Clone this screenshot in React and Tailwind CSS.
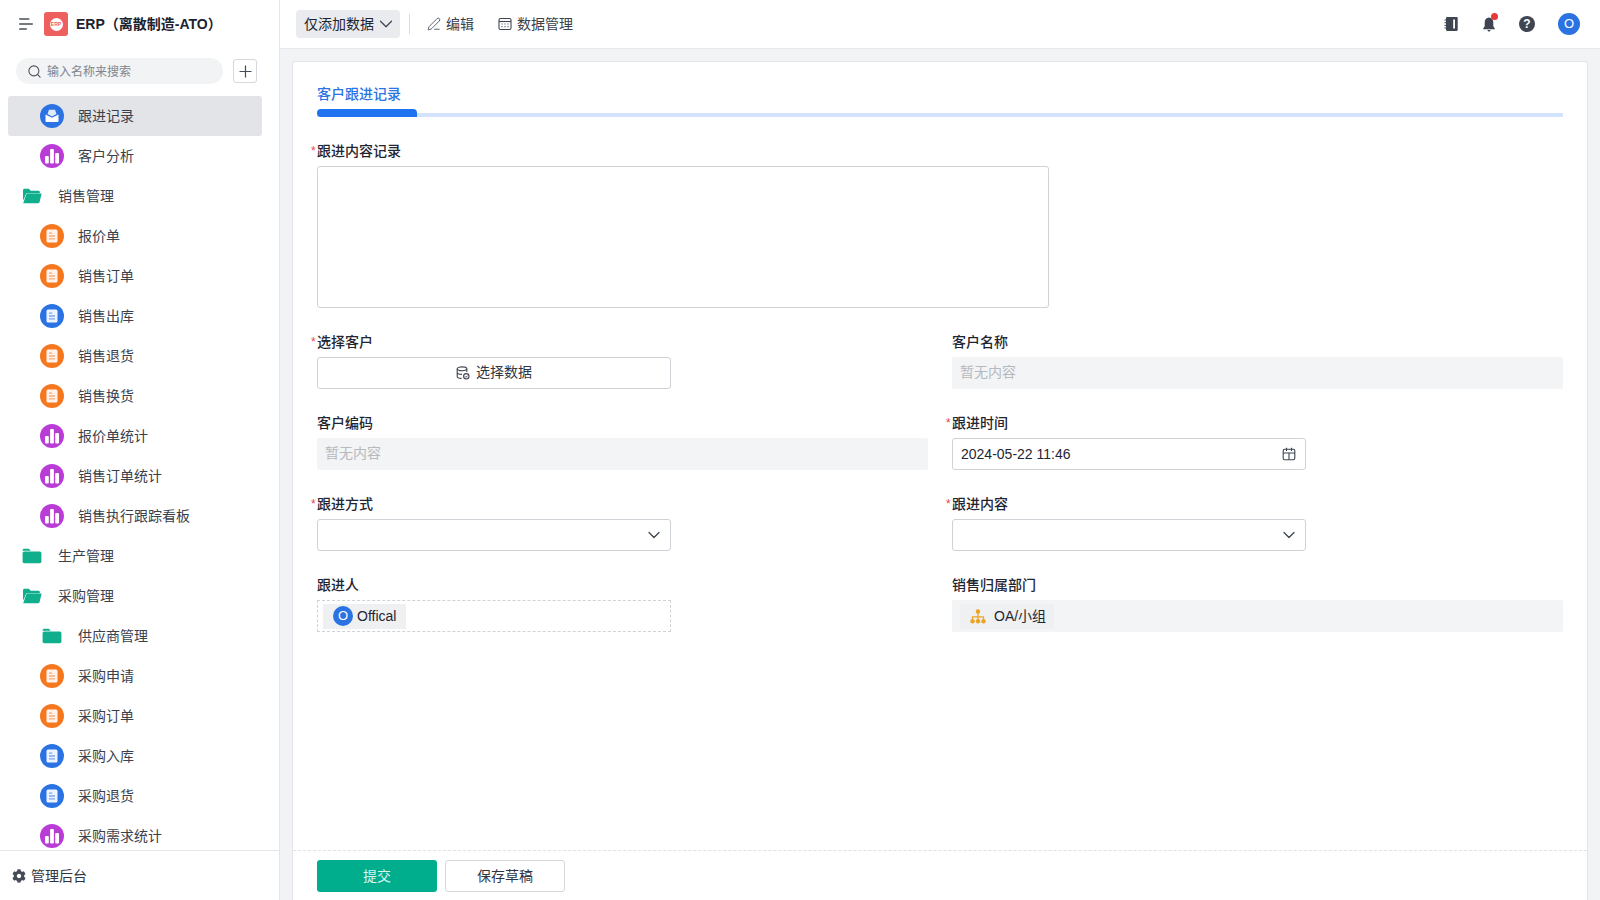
import React from 'react';
import { Search, Plus, ChevronDown, PenLine } from 'lucide-react';
import { FaCog } from 'react-icons/fa';

const NAV = [
  { label: '跟进记录', icon: 'mail', active: true },
  { label: '客户分析', icon: 'chart' },
  { label: '销售管理', icon: 'open', top: true },
  { label: '报价单', icon: 'orange' },
  { label: '销售订单', icon: 'orange' },
  { label: '销售出库', icon: 'blue' },
  { label: '销售退货', icon: 'orange' },
  { label: '销售换货', icon: 'orange' },
  { label: '报价单统计', icon: 'chart' },
  { label: '销售订单统计', icon: 'chart' },
  { label: '销售执行跟踪看板', icon: 'chart' },
  { label: '生产管理', icon: 'folder', top: true },
  { label: '采购管理', icon: 'open', top: true },
  { label: '供应商管理', icon: 'folder', sub: true },
  { label: '采购申请', icon: 'orange' },
  { label: '采购订单', icon: 'orange' },
  { label: '采购入库', icon: 'blue' },
  { label: '采购退货', icon: 'blue' },
  { label: '采购需求统计', icon: 'chart' },
];

function FolderIcon({ open }) {
  return (
    <svg width="20" height="16" viewBox="0 0 20 16" className="shrink-0">
      {open ? (
        <>
          <path d="M1 2.500C1 1.400 1.600.8 2.600.8h4.200l2 2h7.600c.9 0 1.400.5 1.400 1.400v1H4.200L1.600 12 1 11z" fill="#0fae8c" />
          <path d="M4.600 5.600H19.600L17.600 14c-.2.7-.7 1.200-1.500 1.200H1.200z" fill="#0fae8c" />
        </>
      ) : (
        <>
          <path d="M.6 2.400C.6 1.400 1.200.8 2.200.8h4.600l2 2H.6z" fill="#0fae8c" />
          <rect x="0.6" y="3.400" width="18.800" height="11.800" rx="1.600" fill="#0fae8c" />
        </>
      )}
    </svg>
  );
}

function DocIcon({ color }) {
  return (
    <svg width="12" height="14" viewBox="0 0 12 14">
      <rect x="0.5" y="0.5" width="11" height="13" rx="1.500" fill="#fff" fillOpacity="0.92" />
      <path d="M3 4.200h3.200M3 7h6M3 9.800h6" stroke={color} strokeOpacity="0.6" strokeWidth="1.300" />
    </svg>
  );
}

function NavIcon({ type }) {
  if (type === 'folder') return <FolderIcon />;
  if (type === 'open') return <FolderIcon open />;
  if (type === 'orange') {
    return (
      <span className="flex h-6 w-6 shrink-0 items-center justify-center rounded-full bg-[#f5781f]">
        <DocIcon color="#f5781f" />
      </span>
    );
  }
  if (type === 'blue') {
    return (
      <span className="flex h-6 w-6 shrink-0 items-center justify-center rounded-full bg-[#2b73e3]">
        <DocIcon color="#2b73e3" />
      </span>
    );
  }
  if (type === 'chart') {
    return (
      <span className="flex h-6 w-6 shrink-0 items-center justify-center rounded-full bg-[#b93cd6]">
        <svg width="14" height="16" viewBox="0 0 14 16" fill="#fff">
          <rect x="0" y="8" width="3.800" height="7.500" rx="1" />
          <rect x="5.100" y="1" width="3.800" height="14.500" rx="1" />
          <rect x="10.200" y="5" width="3.800" height="10.500" rx="1" />
        </svg>
      </span>
    );
  }
  return (
    <span className="flex h-6 w-6 shrink-0 items-center justify-center rounded-full bg-[#2b73e3]">
      <svg width="16" height="14" viewBox="0 0 16 14" fill="#fff">
        <path d="M3.500 5 5 .8h6L12.500 5 8 7.400z" fillOpacity="0.85" />
        <path d="M1.500 5.600 8 8.800l6.500-3.200v6.200c0 .8-.5 1.300-1.300 1.300H2.800c-.8 0-1.300-.5-1.300-1.300z" />
      </svg>
    </span>
  );
}

function Sidebar() {
  return (
    <aside className="flex h-full w-[280px] shrink-0 flex-col border-r border-[#e4e6e9] bg-white">
      <div className="flex h-[48px] shrink-0 items-center pl-[19px]">
        <svg width="14" height="12" viewBox="0 0 14 12" className="text-[#4a505a]" fill="currentColor">
          <rect x="0" y="0.2" width="10.500" height="1.500" rx="0.7" />
          <rect x="0" y="5.200" width="14" height="1.500" rx="0.7" />
          <rect x="0" y="10.200" width="8" height="1.500" rx="0.7" />
        </svg>
        <span className="ml-[11px] flex h-6 w-6 items-center justify-center rounded-[3px] bg-[#ee5f5f]">
          <span className="flex h-[13px] w-[13px] items-center justify-center rounded-full bg-white text-[5px] font-bold leading-none text-[#ee5f5f]">
            ERP
          </span>
        </span>
        <span className="ml-2 text-[14px] font-semibold text-[#1c2330]">ERP（离散制造-ATO）</span>
      </div>
      <div className="mt-[10px] flex shrink-0 items-center px-4">
        <div className="flex h-[26px] w-[207px] items-center rounded-full bg-[#f1f3f5] pl-[11px]">
          <Search size={15} strokeWidth={1.7} className="text-[#4a505a]" />
          <span className="ml-[5px] pt-[1px] text-[12px] text-[#80868f]">输入名称来搜索</span>
        </div>
        <button className="ml-[10px] flex h-6 w-6 items-center justify-center rounded-[3px] border border-[#d5d8dc] text-[#454c57]">
          <Plus size={19} strokeWidth={1.5} />
        </button>
      </div>
      <nav className="mt-[12px] min-h-0 flex-1 overflow-hidden pl-2 pr-[17px]">
        {NAV.map((item) => (
          <div
            key={item.label}
            className={`flex h-10 items-center rounded-[3px] ${item.top ? 'pl-[14px]' : item.sub ? 'pl-[34px]' : 'pl-[32px]'} ${item.active ? 'bg-[#e2e4e7]' : ''}`}
          >
            <NavIcon type={item.icon} />
            <span className={`${item.top ? 'ml-4' : item.sub ? 'ml-[16px]' : 'ml-[14px]'} text-[14px] text-[#3a414c]`}>{item.label}</span>
          </div>
        ))}
      </nav>
      <div className="flex h-[50px] shrink-0 items-center border-t border-[#e4e6e9] pl-3">
        <FaCog size={14} className="text-[#454c57]" />
        <span className="ml-[5px] pt-[2px] text-[14px] text-[#2f3642]">管理后台</span>
      </div>
    </aside>
  );
}

function Header() {
  return (
    <header className="flex h-[49px] shrink-0 items-center border-b border-[#e6e8eb] bg-white pl-4 pr-[20px]">
      <div className="flex h-7 items-center rounded-[4px] bg-[#e9ebee] pl-2 pr-[3px] text-[14px] text-[#1f2632]">
        <span>仅添加数据</span>
        <ChevronDown size={22} strokeWidth={1.3} className="ml-[1px] text-[#3d4450]" />
      </div>
      <span className="ml-[9px] h-[20px] w-px bg-[#d9dbdf]" />
      <PenLine size={14} strokeWidth={1.4} className="ml-[17px] text-[#3d4450]" />
      <span className="ml-[5px] text-[14px] text-[#3a414c]">编辑</span>
      <svg width="14" height="14" viewBox="0 0 14 14" fill="none" stroke="#3d4450" strokeWidth="1.100" className="ml-[24px]">
        <rect x="1" y="1.500" width="12" height="11" rx="1.500" />
        <path d="M1 4.500h12" />
        <path d="M3.500 7h1M6.500 7h1M9.500 7h1M3.500 9.700h1M6.500 9.700h1M9.500 9.700h1" strokeWidth="1.200" />
      </svg>
      <span className="ml-[5px] text-[14px] text-[#3a414c]">数据管理</span>
      <div className="ml-auto flex items-center">
        <svg width="16" height="16" viewBox="0 0 16 16">
          <path d="M3 2.200C3 1.500 3.500 1 4.200 1h9.300c.7 0 1.200.5 1.200 1.200v11.600c0 .7-.5 1.200-1.200 1.200H4.200C3.500 15 3 14.500 3 13.800z" fill="#3f4652" />
          <path d="M1.500 4h2.200M1.500 6.700h2.200M1.500 9.400h2.200M1.500 12h2.200" stroke="#3f4652" strokeWidth="1" />
          <rect x="10.200" y="3.500" width="1.800" height="9" fill="#fff" />
        </svg>
        <span className="relative ml-[22px] flex">
          <svg width="16" height="16" viewBox="0 0 16 16" fill="#3f4652">
            <path d="M8 1.500c-2.800 0-4.300 2.200-4.300 4.800v4L2.200 12.500v.8h11.600v-.8l-1.500-2.200v-4c0-2.600-1.500-4.800-4.300-4.800z" />
            <path d="M6.300 14h3.400c-.2.900-.9 1.500-1.700 1.500S6.500 14.900 6.300 14z" />
          </svg>
          <span className="absolute right-[-1px] top-[-3px] h-[7px] w-[7px] rounded-full bg-[#e5393b]" />
        </span>
        <span className="ml-[22px] flex h-4 w-4 items-center justify-center rounded-full bg-[#3f4652] text-[12px] font-bold leading-none text-white">
          ?
        </span>
        <span className="ml-[23px] flex h-[22px] w-[22px] items-center justify-center rounded-full bg-[#2b73e3] text-[13px] text-white">
          O
        </span>
      </div>
    </header>
  );
}

function Label({ text, required }) {
  return (
    <div className="relative flex h-[23px] items-center pt-[2px] text-[14px] font-medium text-[#1f2632]">
      {required && <span className="absolute left-[-6px] top-[3px] text-[12px] text-[#e5484d]">*</span>}
      {text}
    </div>
  );
}

function Field({ label, required, children }) {
  return (
    <div>
      <Label text={label} required={required} />
      <div className="mt-[4px]">{children}</div>
    </div>
  );
}

function Empty() {
  return (
    <div className="flex h-8 items-center rounded-[2px] bg-[#f2f4f5] px-2 pb-[1px] text-[14px] text-[#b6b9be]">暂无内容</div>
  );
}

function SelectBox() {
  return (
    <div className="flex h-8 w-[354px] items-center justify-end rounded-[3px] border border-[#cfd2d6] bg-white pr-[6px]">
      <ChevronDown size={20} strokeWidth={1.5} className="text-[#3d4450]" />
    </div>
  );
}

function FormCard() {
  return (
    <section className="mx-[12px] mt-[12px] flex min-h-0 flex-1 flex-col rounded-t-[3px] border border-b-0 border-[#e2e4e7] bg-white">
      <div className="min-h-0 flex-1 overflow-hidden px-[24px]">
        <div className="mt-[22px] text-[14px] font-medium leading-5 text-[#2b73e3]">客户跟进记录</div>
        <div className="mt-[5px] h-2">
          <div className="relative top-[4px] h-1 bg-[#d3e3fb]">
            <div className="absolute left-0 top-[-4px] h-2 w-[100px] rounded-t-[6px] rounded-bl-[6px] bg-[#1f73f1]" />
          </div>
        </div>
        <div className="mt-[22px]">
          <Label text="跟进内容记录" required />
          <div className="mt-[4px] h-[142px] w-[732px] rounded-[3px] border border-[#cfd2d6] bg-white" />
        </div>
        <div className="mt-[22px] grid grid-cols-2 gap-x-6 gap-y-[22px]">
          <Field label="选择客户" required>
            <div className="flex h-8 w-[354px] items-center justify-center rounded-[3px] border border-[#cfd2d6] bg-white text-[14px] text-[#2f3642]">
              <svg width="14" height="14" viewBox="0 0 14 14" fill="none" stroke="#3d4450" strokeWidth="1.100" className="mr-[6px]">
                <ellipse cx="6" cy="2.800" rx="4.800" ry="1.900" />
                <path d="M1.200 2.800v7.700c0 1 2 1.900 4.300 1.900M10.800 2.800v3.200M1.200 6.500c0 1 2 1.900 4.800 1.900" />
                <circle cx="10.300" cy="10.300" r="2.700" />
                <path d="m9 10.300 1 1 1.500-1.700" strokeWidth="0.900" />
              </svg>
              <span className="pb-[1px]">选择数据</span>
            </div>
          </Field>
          <Field label="客户名称">
            <Empty />
          </Field>
          <Field label="客户编码">
            <Empty />
          </Field>
          <Field label="跟进时间" required>
            <div className="flex h-8 w-[354px] items-center justify-between rounded-[3px] border border-[#cfd2d6] bg-white pl-2 pr-[9px] text-[14px] text-[#1f2632]">
              <span>2024-05-22 11:46</span>
              <svg width="14" height="14" viewBox="0 0 14 14" fill="none" stroke="#3d4450" strokeWidth="1.100">
                <rect x="1.200" y="2.200" width="11.600" height="10.600" rx="1.500" />
                <path d="M1.200 6h11.600M4.500 .8v3.200M9.500 .8v3.200M7 6v6.800" />
              </svg>
            </div>
          </Field>
          <Field label="跟进方式" required>
            <SelectBox />
          </Field>
          <Field label="跟进内容" required>
            <SelectBox />
          </Field>
          <Field label="跟进人">
            <div className="flex h-8 w-[354px] items-center border border-dashed border-[#cfd2d6] pl-[5px]">
              <div className="flex h-[25px] items-center bg-[#eef0f2] px-[10px] text-[14px] text-[#1f2632]">
                <span className="mr-[4px] flex h-5 w-5 items-center justify-center rounded-full bg-[#2b73e3] text-[13px] text-white">
                  O
                </span>
                <span className="pt-[1px]">Offical</span>
              </div>
            </div>
          </Field>
          <Field label="销售归属部门">
            <div className="flex h-8 items-center rounded-[2px] bg-[#f2f4f5] pl-2">
              <div className="flex h-[25px] items-center rounded-[3px] bg-[#eef0f2] pl-[10px] pr-2 text-[14px] text-[#1f2632]">
                <svg width="16" height="15" viewBox="0 0 16 15" fill="#eda323" className="mr-[8px]">
                  <circle cx="8" cy="2.500" r="2.200" />
                  <circle cx="2.500" cy="12.300" r="2.200" />
                  <circle cx="8" cy="12.300" r="2.200" />
                  <circle cx="13.500" cy="12.300" r="2.200" />
                  <path d="M8 4v8M2.500 11V7.800h11V11" stroke="#eda323" strokeWidth="1.200" fill="none" />
                </svg>
                <span>OA/小组</span>
              </div>
            </div>
          </Field>
        </div>
      </div>
      <div className="flex h-[50px] shrink-0 items-start border-t border-dashed border-[#dfe1e4] pl-[24px] pt-[9px]">
        <button className="h-8 w-[120px] rounded-[3px] bg-[#00ae8e] text-[14px] text-[#d9f5ee]">提交</button>
        <button className="ml-2 h-8 w-[120px] rounded-[3px] border border-[#d5d8dc] bg-white text-[14px] text-[#2f3642]">
          保存草稿
        </button>
      </div>
    </section>
  );
}

export default function App() {
  return (
    <div className="flex h-[900px] w-[1600px] overflow-hidden bg-[#f1f3f5] font-['Liberation_Sans','Noto_Sans_CJK_SC',sans-serif]">
      <Sidebar />
      <main className="flex min-w-0 flex-1 flex-col">
        <Header />
        <FormCard />
      </main>
    </div>
  );
}
